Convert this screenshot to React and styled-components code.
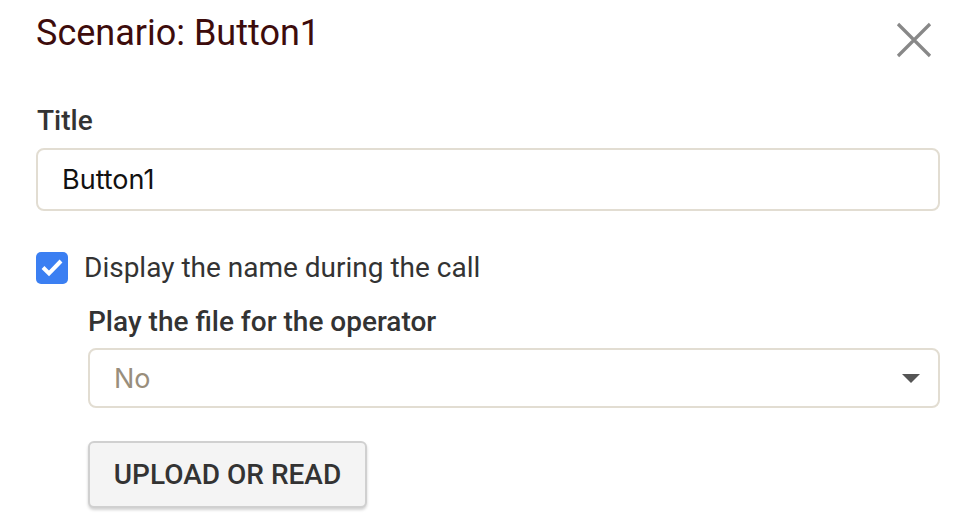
import React from "react";
import styled, { createGlobalStyle } from "styled-components";

const Global = createGlobalStyle`
  html, body { margin: 0; padding: 0; background: #fff; }
  body { font-family: Roboto, "Liberation Sans", sans-serif; }
  * { box-sizing: border-box; }
`;

const Dialog = styled.div`
  width: 960px;
  height: 520px;
  padding: 10px 20px 0 36px;
  display: flex;
  flex-direction: column;
  overflow: hidden;
`;

const Header = styled.div`
  display: flex;
  align-items: flex-start;
  justify-content: space-between;
`;

const Heading = styled.h1`
  margin: 0;
  font-size: 36px;
  font-weight: 400;
  color: #3d0c0c;
  line-height: 46px;
`;

const CloseButton = styled.button`
  border: none;
  background: none;
  padding: 0;
  margin: 12px 8px 0 0;
  width: 36px;
  height: 36px;
  cursor: pointer;
  display: flex;
`;

const Label = styled.div`
  font-size: 28px;
  font-weight: 500;
  color: #333;
  line-height: 34px;
  margin: ${(p) => p.$margin || "0"};
`;

const Field = styled.div`
  height: ${(p) => p.$h}px;
  border: 2px solid #e2ddd2;
  border-radius: 8px;
  display: flex;
  align-items: center;
  justify-content: space-between;
  padding: 0 18px 0 24px;
  font-family: Inter, Roboto, sans-serif;
  font-size: 27px;
  color: ${(p) => (p.$muted ? "#998e7c" : "#111")};
`;

const CheckRow = styled.label`
  display: flex;
  align-items: center;
  gap: 16px;
  margin-top: 40px;
  font-size: 28px;
  line-height: 34px;
  color: #333;
`;

const Box = styled.span`
  width: 32px;
  height: 32px;
  border-radius: 5px;
  background: #3b7ff2;
  display: flex;
  align-items: center;
  justify-content: center;
`;

const Indented = styled.div`
  margin-left: 52px;
  display: flex;
  flex-direction: column;
  align-items: stretch;
`;

const Caret = styled.span`
  width: 0;
  height: 0;
  border-left: 9px solid transparent;
  border-right: 9px solid transparent;
  border-top: 9px solid #555;
`;

const Button = styled.button`
  align-self: flex-start;
  margin-top: 33px;
  height: 67px;
  padding: 0;
  width: 279px;
  background: #f4f4f4;
  border: 2px solid #d0d0d0;
  border-radius: 6px;
  box-shadow: 0 2px 3px rgba(0, 0, 0, 0.18);
  font-family: Roboto, "Liberation Sans", sans-serif;
  font-size: 28px;
  font-weight: 500;
  color: #333;
`;

export default function App() {
  return (
    <>
      <Global />
      <Dialog>
        <Header>
          <Heading>Scenario: Button1</Heading>
          <CloseButton aria-label="close">
            <svg width="36" height="36" viewBox="0 0 36 36">
              <path d="M2 2 L34 34 M34 2 L2 34" stroke="#888" strokeWidth="3.2" />
            </svg>
          </CloseButton>
        </Header>
        <Label $margin="46px 0 10px 1px">Title</Label>
        <Field $h={63}>Button1</Field>
        <CheckRow>
          <Box>
            <svg width="32" height="32" viewBox="0 0 32 32">
              <path d="M7 15.5 L13 21.5 L25 9" fill="none" stroke="#fff" strokeWidth="4" />
            </svg>
          </Box>
          Display the name during the call
        </CheckRow>
        <Indented>
          <Label $margin="20px 0 9px 0">Play the file for the operator</Label>
          <Field $h={60} $muted>
            No
            <Caret />
          </Field>
          <Button>UPLOAD OR READ</Button>
        </Indented>
      </Dialog>
    </>
  );
}
